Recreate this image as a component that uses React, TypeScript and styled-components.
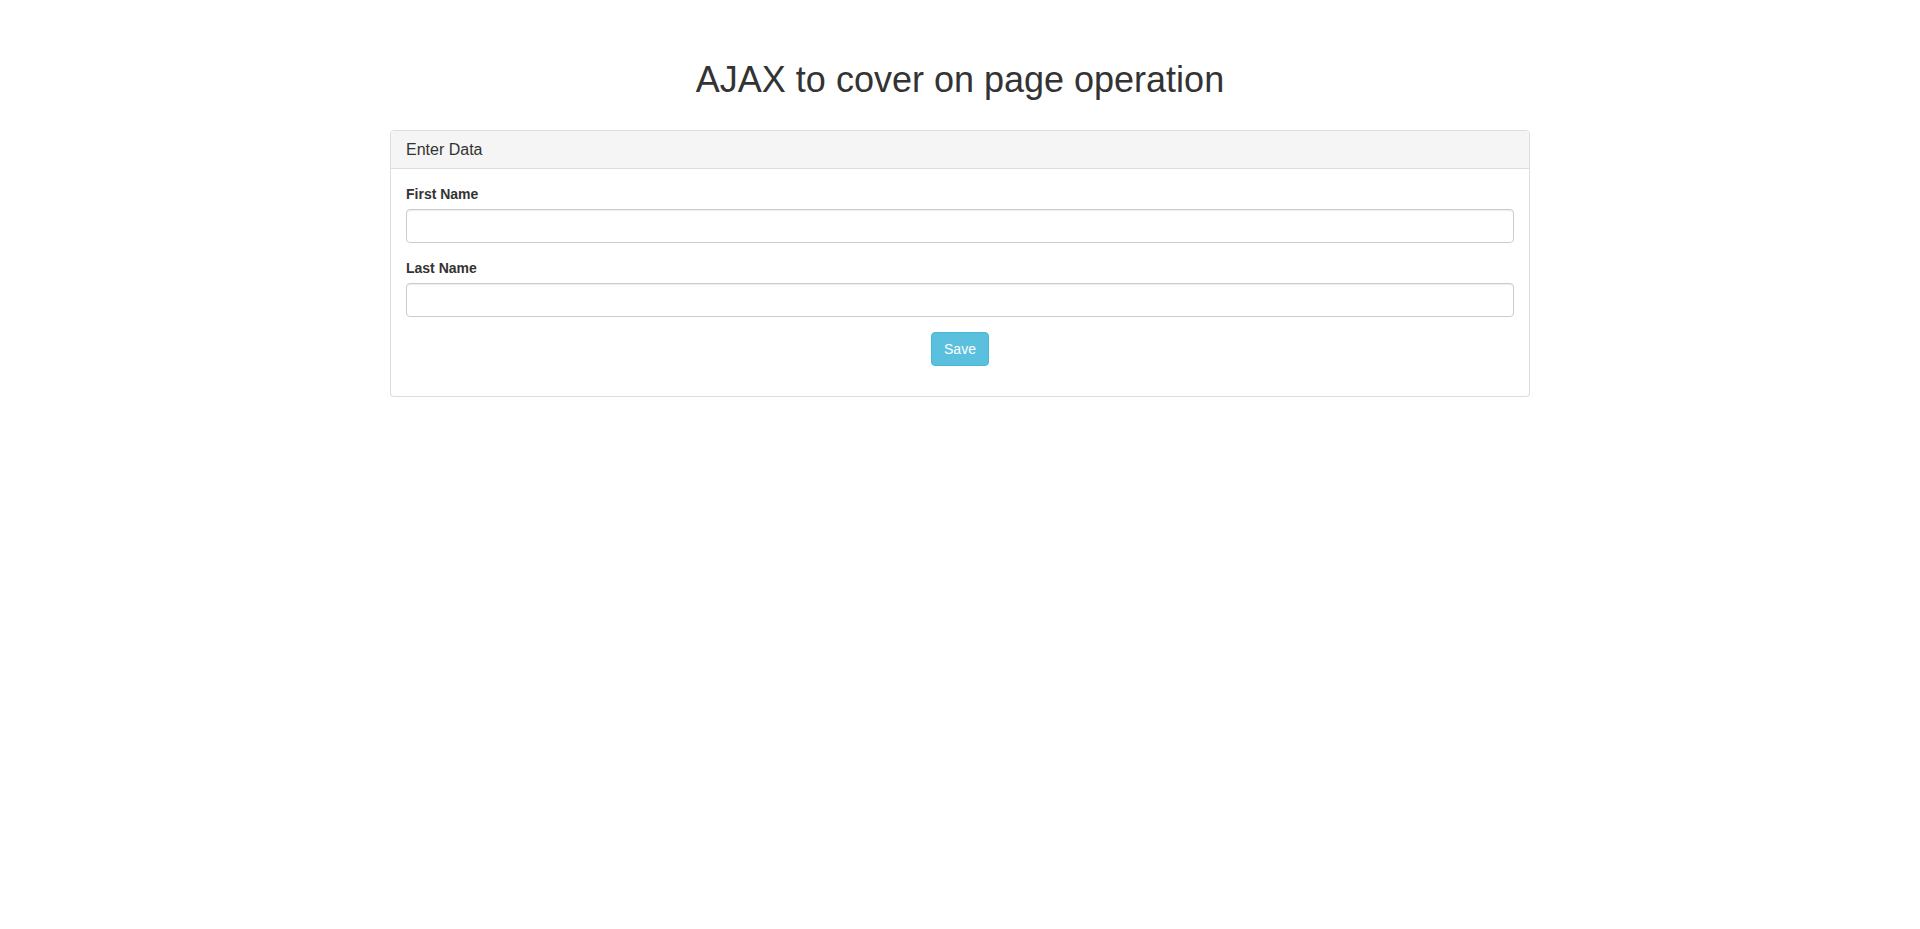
import React from "react";
import styled, { createGlobalStyle } from "styled-components";

const GlobalStyle = createGlobalStyle`
  * { box-sizing: border-box; }
  html, body { margin: 0; padding: 0; background: #fff; }
  body {
    font-family: "Liberation Sans", Arial, Helvetica, sans-serif;
    font-size: 14px;
    line-height: 1.42857143;
    color: #333;
  }
`;

const Container = styled.div`
  width: 1170px;
  margin: 0 auto;
  padding: 0 15px;
`;

const Title = styled.h1`
  font-size: 36px;
  font-weight: 500;
  line-height: 1.1;
  text-align: center;
  margin: 60px 0 30px;
  color: #333;
`;

const Panel = styled.div`
  border: 1px solid #ddd;
  border-radius: 4px;
  background: #fff;
  box-shadow: 0 1px 1px rgba(0, 0, 0, 0.05);
`;

const PanelHeading = styled.div`
  padding: 10px 15px;
  background: #f5f5f5;
  border-bottom: 1px solid #ddd;
  border-top-left-radius: 3px;
  border-top-right-radius: 3px;
`;

const PanelTitle = styled.h3`
  margin: 0;
  font-size: 16px;
  font-weight: 500;
  line-height: 1.1;
  color: #333;
`;

const PanelBody = styled.div`
  padding: 15px;
`;

const FormGroup = styled.div<{ $center?: boolean }>`
  margin-bottom: 15px;
  text-align: ${(p) => (p.$center ? "center" : "left")};
`;

const Label = styled.label`
  display: inline-block;
  max-width: 100%;
  margin-bottom: 5px;
  font-weight: 700;
`;

const Input = styled.input`
  display: block;
  width: 100%;
  height: 34px;
  padding: 6px 12px;
  font-family: inherit;
  font-size: 14px;
  line-height: 1.42857143;
  color: #555;
  background: #fff;
  border: 1px solid #ccc;
  border-radius: 4px;
  box-shadow: inset 0 1px 1px rgba(0, 0, 0, 0.075);
  outline: none;
`;

const Button = styled.button`
  display: inline-block;
  padding: 6px 12px;
  font-family: inherit;
  font-size: 14px;
  line-height: 1.42857143;
  color: #fff;
  background: #5bc0de;
  border: 1px solid #46b8da;
  border-radius: 4px;
  cursor: pointer;
`;

export default function App() {
  return (
    <>
      <GlobalStyle />
      <Container>
        <Title>AJAX to cover on page operation</Title>
        <Panel>
          <PanelHeading>
            <PanelTitle>Enter Data</PanelTitle>
          </PanelHeading>
          <PanelBody>
            <FormGroup>
              <Label htmlFor="firstName">First Name</Label>
              <Input id="firstName" type="text" />
            </FormGroup>
            <FormGroup>
              <Label htmlFor="lastName">Last Name</Label>
              <Input id="lastName" type="text" />
            </FormGroup>
            <FormGroup $center>
              <Button type="button">Save</Button>
            </FormGroup>
          </PanelBody>
        </Panel>
      </Container>
    </>
  );
}
